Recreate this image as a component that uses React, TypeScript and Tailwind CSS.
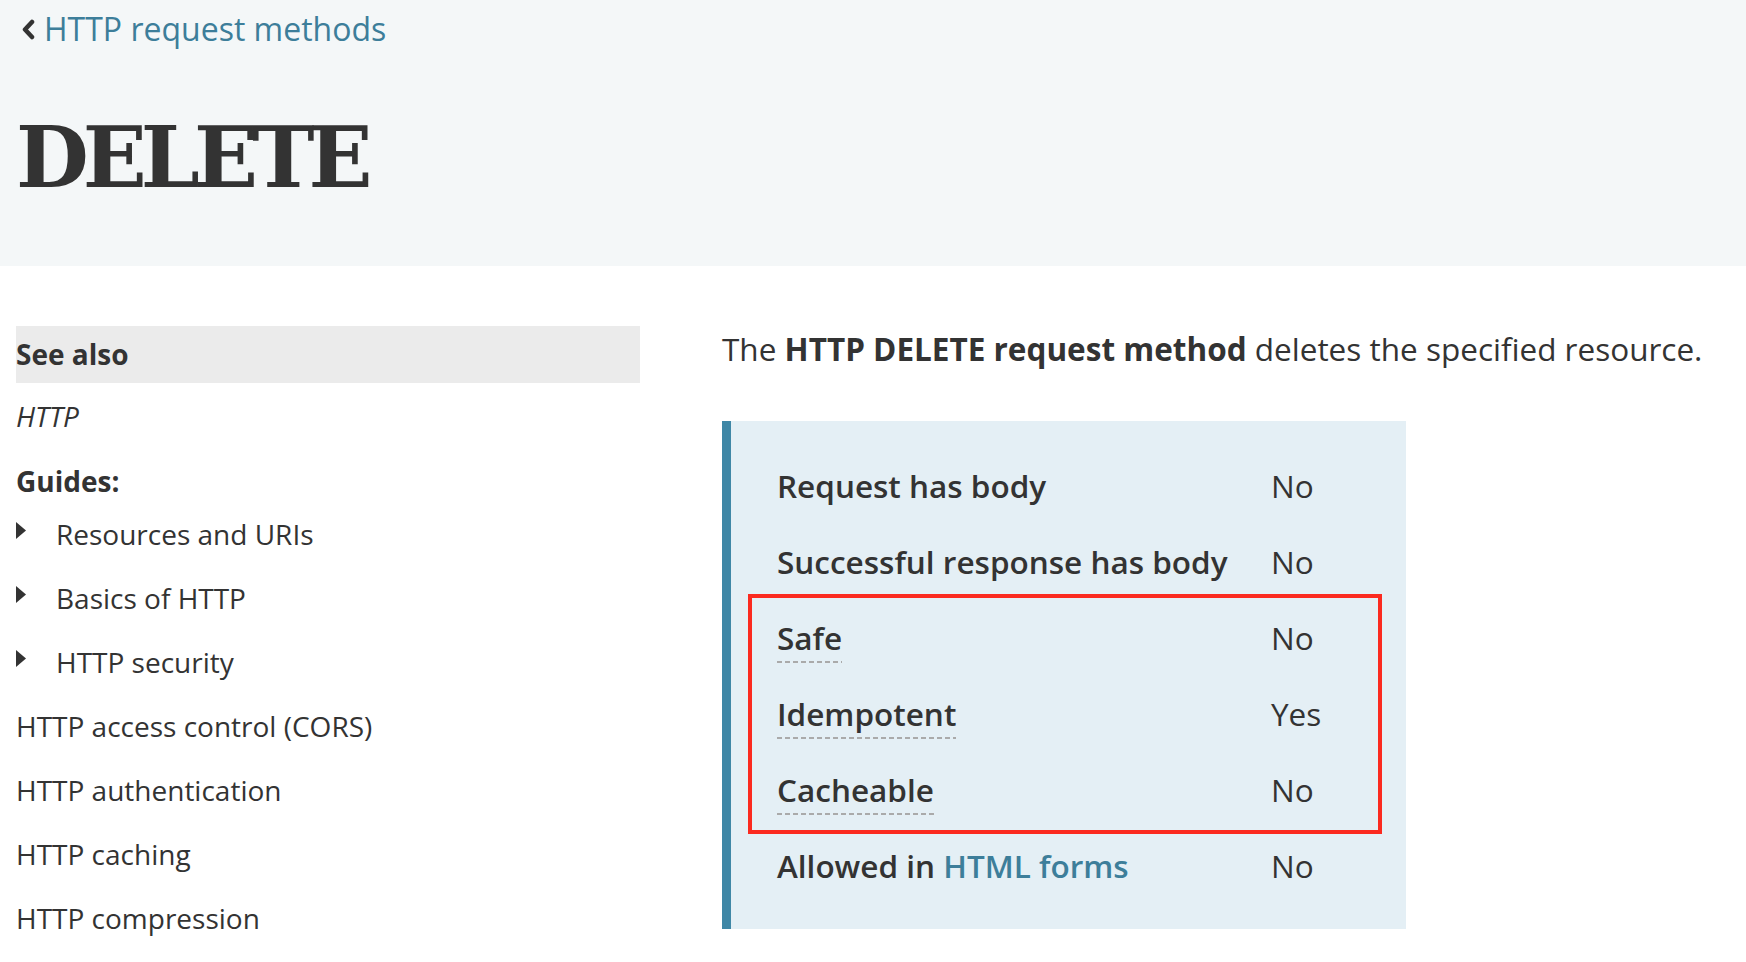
import { ReactNode } from "react";

const sans = "font-['Open_Sans',_'Noto_Sans',_sans-serif]";

const guides = ["Resources and URIs", "Basics of HTTP", "HTTP security"];
const topics = [
  "HTTP access control (CORS)",
  "HTTP authentication",
  "HTTP caching",
  "HTTP compression",
];

type Row = { label: ReactNode; value: string; dashed?: boolean };

const rows: Row[] = [
  { label: "Request has body", value: "No" },
  { label: "Successful response has body", value: "No" },
  { label: "Safe", value: "No", dashed: true },
  { label: "Idempotent", value: "Yes", dashed: true },
  { label: "Cacheable", value: "No", dashed: true },
  {
    label: (
      <>
        Allowed in <span className="text-[#3d7e9a]">HTML forms</span>
      </>
    ),
    value: "No",
  },
];

const Caret = () => (
  <svg width="10" height="17" viewBox="0 0 10 17" className="shrink-0 mt-[6px]">
    <path d="M0 0 L10 8.5 L0 17 Z" fill="#333" />
  </svg>
);

const App = () => {
  return (
    <div className={`${sans} text-[#333] bg-white min-h-[962px]`}>
      <header className="h-[266px] bg-[#f4f7f8] pl-[19px]">
        <div className="flex items-center gap-[9px] pt-[9px] pl-[2px]">
          <svg width="14" height="21" viewBox="0 0 14 21">
            <path
              d="M11 3 L4 10.5 L11 18"
              fill="none"
              stroke="#333"
              strokeWidth="4.5"
              strokeLinecap="round"
              strokeLinejoin="round"
            />
          </svg>
          <span className="text-[32px] leading-[40px] text-[#3d7e9a]">
            HTTP request methods
          </span>
        </div>
        <h1 className="mt-[67px] -ml-[3px] font-['DejaVu_Serif',_serif] font-bold text-[84px] leading-none tracking-[-6px]">
          DELETE
        </h1>
      </header>

      <div className="flex pl-[16px] gap-[82px]">
        <aside className="w-[624px] shrink-0 pt-[60px] text-[28px] leading-[37px]">
          <div className="h-[57px] bg-[#ebebeb] leading-[57px] font-bold">
            See also
          </div>
          <div className="mt-[15px] italic">HTTP</div>
          <div className="mt-[28px] font-bold">Guides:</div>
          <ul className="mt-[16px] flex flex-col gap-[27px]">
            {guides.map((g) => (
              <li key={g} className="flex gap-[30px]">
                <Caret />
                <span>{g}</span>
              </li>
            ))}
            {topics.map((t) => (
              <li key={t}>{t}</li>
            ))}
          </ul>
        </aside>

        <main className="pt-[63px]">
          <p className="text-[31.5px] leading-[40px] whitespace-nowrap">
            The <strong className="font-bold">HTTP DELETE request method</strong>{" "}
            deletes the specified resource.
          </p>

          <div className="relative mt-[52px] w-[684px] bg-[#e4eff5] border-l-[9px] border-[#3f87a6] pl-[46px] pt-[27px] pb-[25px]">
            {rows.map((r, i) => (
              <div key={i} className="flex h-[76px] leading-[76px] text-[31.5px]">
                <div className="w-[494px] shrink-0 font-semibold">
                  <span className="relative inline-block">
                    {r.label}
                    {r.dashed && (
                      <span className="absolute left-0 right-0 top-[61px] h-[2px] bg-[repeating-linear-gradient(to_right,#aaaaaa_0_5px,transparent_5px_8px)]" />
                    )}
                  </span>
                </div>
                <div>{r.value}</div>
              </div>
            ))}
            <div className="absolute left-[17px] top-[173px] w-[634px] h-[240px] border-[4px] border-[#fb2a1f] pointer-events-none" />
          </div>
        </main>
      </div>
    </div>
  );
};

export default App;
